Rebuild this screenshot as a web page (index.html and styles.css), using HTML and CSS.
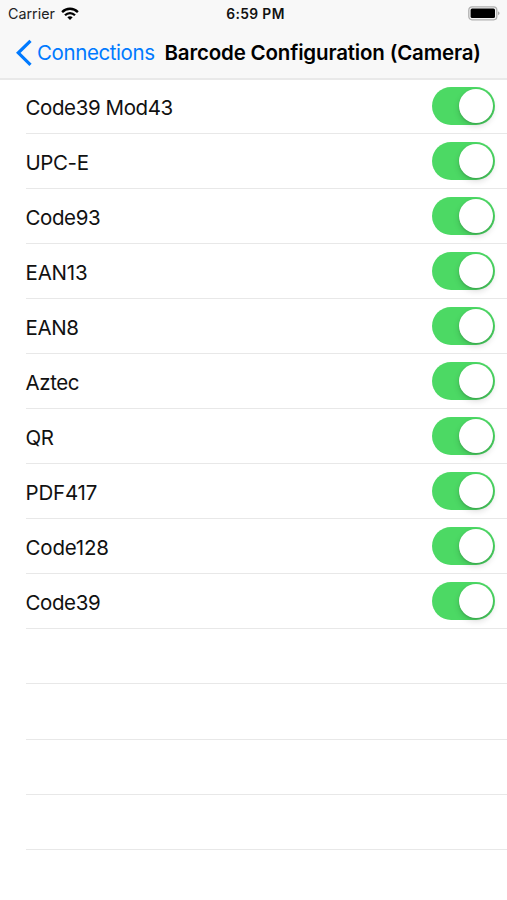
FILE: index.html
```html
<!DOCTYPE html>
<html lang="en">
<head>
<meta charset="utf-8">
<title>Barcode Configuration (Camera)</title>
<link rel="stylesheet" href="styles.css">
</head>
<body>
<header class="header">
  <div class="status">
    <div class="carrier"><span>Carrier</span>
      <svg class="wifi" width="18" height="14" viewBox="0 0 18 14" fill="none" stroke="#000" stroke-width="2.3"><path d="M1.1 5.1C5.5.6 12.5.6 16.9 5.1M4 8.2C6.9 5.3 11.1 5.3 14 8.2"/><path d="M9 13 6.3 10.3C7.9 8.8 10.1 8.8 11.7 10.3Z" fill="#000" stroke="none"/></svg>
    </div>
    <time class="time">6:59 PM</time>
    <svg class="battery" width="33" height="15" viewBox="0 0 33 15"><rect x=".8" y=".8" width="28" height="13" rx="3.2" fill="#f4f4f4" stroke="#b0b0b0" stroke-width="1.3"/><rect x="2.6" y="2.6" width="24.4" height="9.4" rx="1.5"/><path d="M30.2 5.3Q32.8 7.3 30.2 9.3Z" fill="#999"/></svg>
  </div>
  <nav class="nav">
    <a class="back"><svg width="17" height="28" viewBox="0 0 17 28" fill="none" stroke="#007aff" stroke-width="3.2"><path d="M15.5 1.8 3.3 13.8 15.5 25.8"/></svg><span>Connections</span></a>
    <h1 class="title">Barcode Configuration (Camera)</h1>
  </nav>
</header>
<main class="list">
  <div class="row"><span class="label">Code39 Mod43</span><i class="switch"></i></div>
  <div class="row"><span class="label">UPC-E</span><i class="switch"></i></div>
  <div class="row"><span class="label">Code93</span><i class="switch"></i></div>
  <div class="row"><span class="label wide">EAN13</span><i class="switch"></i></div>
  <div class="row"><span class="label">EAN8</span><i class="switch"></i></div>
  <div class="row"><span class="label">Aztec</span><i class="switch"></i></div>
  <div class="row"><span class="label">QR</span><i class="switch"></i></div>
  <div class="row"><span class="label wide">PDF417</span><i class="switch"></i></div>
  <div class="row"><span class="label wide">Code128</span><i class="switch"></i></div>
  <div class="row"><span class="label">Code39</span><i class="switch"></i></div>
  <div class="row"></div>
  <div class="row"></div>
  <div class="row"></div>
  <div class="row"></div>
</main>
</body>
</html>
```
FILE: styles.css
```css
* { box-sizing: border-box; }
body { margin: 0; height: 900px; overflow: hidden; background: #fff; color: #111; font-family: Inter, "Liberation Sans", sans-serif; }
.header { height: 80px; background: #f8f8f8; border-bottom: 2px solid #e9e9e9; }
.status { display: grid; grid-template-columns: 1fr auto 1fr; align-items: center; height: 27px; padding: 0 6px 0 8px; }
.carrier { display: flex; align-items: center; gap: 6px; font-size: 14.3px; color: #222; }
.time { padding-left: 2px; font-size: 13.8px; font-weight: 600; letter-spacing: 0.4px; }
.battery { justify-self: end; }
.nav { display: flex; align-items: center; height: 51px; padding-left: 15px; white-space: nowrap; }
.back { display: flex; align-items: center; gap: 5px; width: 149.5px; color: #007aff; font-size: 20.5px; letter-spacing: -0.4px; }
.title { margin: 0; font-size: 20.5px; font-weight: 600; letter-spacing: -0.17px; color: #000; }
.list { padding-left: 25.5px; }
.row { display: flex; align-items: center; justify-content: space-between; height: 55.05px; padding-right: 12px; border-bottom: 1px solid #e8e8e8; font-size: 20.5px; letter-spacing: -0.4px; }
.row:first-child { height: 54px; }
.label { padding-top: 2px; }
.wide { letter-spacing: -0.18px; }
.switch { display: block; width: 63px; height: 38px; margin-bottom: 1px; padding: 2px; border-radius: 19px; background: #4cd964; }
.switch::before { content: ""; display: block; width: 34px; height: 34px; margin-left: 25px; border-radius: 50%; background: #fff; box-shadow: 0 3px 6px rgba(0,0,0,.15), 0 1px 2px rgba(0,0,0,.15); }
```
